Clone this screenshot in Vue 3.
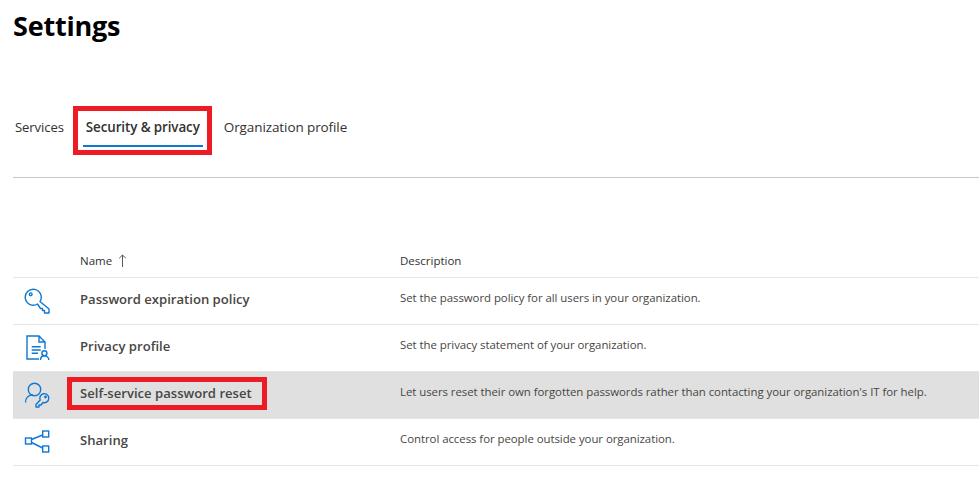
<script setup>
const rows = [
  { name: 'Password expiration policy', desc: 'Set the password policy for all users in your organization.', icon: 'key' },
  { name: 'Privacy profile', desc: 'Set the privacy statement of your organization.', icon: 'doc' },
  { name: 'Self-service password reset', desc: "Let users reset their own forgotten passwords rather than contacting your organization's IT for help.", icon: 'user', selected: true },
  { name: 'Sharing', desc: 'Control access for people outside your organization.', icon: 'share' },
]
</script>

<template>
  <div class="page">
    <h1 class="title">Settings</h1>
    <nav class="tabs">
      <span class="tab first">Services</span>
      <span class="tab active"><span class="tab-label">Security &amp; privacy</span></span>
      <span class="tab last">Organization profile</span>
    </nav>
    <div class="table">
      <div class="head">
        <span class="col-name">Name <svg class="arrow" width="9" height="14" viewBox="0 0 9 14"><path d="M4.500 13V1M1.200 4.300 4.500 1l3.300 3.300" fill="none" stroke="#555" stroke-width="1"/></svg></span>
        <span>Description</span>
      </div>
      <div v-for="r in rows" :key="r.name" class="row" :class="{ selected: r.selected }">
        <span class="icon">
          <svg width="28" height="28" viewBox="0 0 28 28" fill="none" stroke="#0f78d4" stroke-width="1.4">
            <g v-if="r.icon === 'key'">
              <path d="M16 14.500 25 22V26H20.500V23.500H18.500V21.500H16.500L13.500 17A8 8 0 1 1 16 14.500Z" stroke-linejoin="round"/>
              <circle cx="6.700" cy="7.300" r="1.400"/>
            </g>
            <g v-else-if="r.icon === 'doc'">
              <path d="M15 25H3V2H15L21 8V15M15 2V8H21"/>
              <path d="M7.700 12.700H16.700M7.700 16H16.700M7.700 19.300H14"/>
              <circle cx="20.400" cy="19.300" r="2.500"/>
              <path d="M16.500 26C16.500 23.500 18.200 21.800 20.400 21.800S24.800 23.500 24.800 26"/>
            </g>
            <g v-else-if="r.icon === 'user'">
              <circle cx="10.500" cy="8.500" r="6.200"/>
              <path d="M1.500 21.500C1.500 17 4.500 14 9 13.800"/>
              <path d="M24.800 17.300A4.500 4.500 0 1 0 16.200 19L12 23.500V26H15V24H17L19 21.500A4.500 4.500 0 0 0 24.800 17.300Z" stroke-linejoin="round"/>
              <circle cx="21.500" cy="16" r=".7"/>
            </g>
            <g v-else>
              <rect x="1.500" y="10" width="6" height="6"/>
              <rect x="18.700" y="3" width="6" height="6"/>
              <rect x="18.700" y="18" width="6" height="6"/>
              <path d="M7.500 11.500 18.700 7M7.500 14.500 18.700 20"/>
            </g>
          </svg>
        </span>
        <span class="name"><span class="name-label" :class="{ marked: r.selected }">{{ r.name }}</span></span>
        <span class="desc">{{ r.desc }}</span>
      </div>
    </div>
  </div>
</template>

<style>
html, body { margin: 0; background: #fff; overflow: hidden; }
</style>

<style scoped>
.page {
  width: 979px;
  height: 504px;
  box-sizing: border-box;
  padding-left: 13px;
  font-family: "Open Sans", "Noto Sans", sans-serif;
  color: #323130;
  overflow: hidden;
}
.title {
  margin: 0;
  padding-top: 8px;
  font-size: 27px;
  line-height: 36px;
  font-weight: 700;
  color: #000;
  letter-spacing: -0.2px;
}
.tabs {
  display: flex;
  align-items: flex-start;
  margin-top: 62px;
  height: 49px;
  padding-bottom: 22px;
  border-bottom: 1px solid #c8c8c8;
  font-size: 13px;
  letter-spacing: -0.1px;
  box-sizing: content-box;
}
.tab { white-space: nowrap; line-height: 42px; }
.first { margin-left: 2px; font-size: 13.100px; }
.last { font-size: 13.500px; }
.active {
  box-sizing: border-box;
  width: 139px;
  height: 49px;
  margin-left: 9px;
  margin-right: 12px;
  padding-left: 5px;
  border: 5px solid #ed1c24;
  display: flex;
  font-weight: 600;
  font-size: 13.400px;
}
.tab-label {
  width: 120px;
  height: 34px;
  text-align: center;
  line-height: 32px;
  border-bottom: 2px solid #0f78d4;
  white-space: nowrap;
}
.table { margin-top: 66px; }
.head {
  display: flex;
  height: 34px;
  align-items: center;
  padding-left: 67px;
  font-size: 11.500px;
  border-bottom: 1px solid #e6e6e6;
  box-sizing: border-box;
}
.col-name { width: 320px; display: flex; align-items: center; gap: 6px; }
.arrow { display: block; }
.row {
  display: flex;
  align-items: center;
  height: 47px;
  box-sizing: border-box;
  border-bottom: 1px solid #e6e6e6;
}
.row.selected { background: #e0e0e0; }
.icon {
  width: 67px;
  padding-left: 11px;
  box-sizing: border-box;
  display: flex;
  align-items: center;
  height: 28px;
}
.name {
  display: flex;
  width: 320px;
  padding-bottom: 5px;
  font-size: 13.100px;
  font-weight: 600;
  color: #484644;
  white-space: nowrap;
}
.selected .name { padding-bottom: 3px; }
.name-label.marked {
  box-sizing: border-box;
  height: 33px;
  line-height: 23px;
  width: 200px;
  margin-left: -13px;
  padding-left: 8px;
  border: 5px solid #ed1c24;
}
.desc {
  padding-bottom: 8px;
  font-size: 11.430px;
  letter-spacing: -0.05px;
  color: #484644;
  white-space: nowrap;
}
.selected .desc { padding-bottom: 7px; }
</style>
